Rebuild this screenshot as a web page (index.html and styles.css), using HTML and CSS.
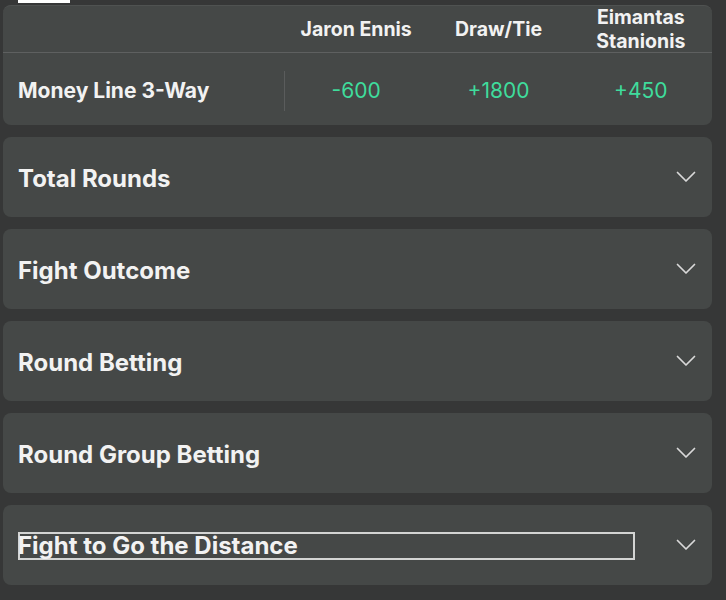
FILE: index.html
```html
<!DOCTYPE html>
<html>
<head>
<meta charset="utf-8">
<link rel="stylesheet" href="styles.css">
</head>
<body>
<div class="page">
  <div class="tabs"><div class="tab-indicator"></div></div>
  <div class="card moneyline">
    <div class="ml-head">
      <div class="ml-label-col"></div>
      <div class="ml-col">Jaron Ennis</div>
      <div class="ml-col">Draw/Tie</div>
      <div class="ml-col">Eimantas<br>Stanionis</div>
    </div>
    <div class="ml-body">
      <div class="ml-label-col"><span class="ml-title">Money Line 3-Way</span></div>
      <div class="ml-col odds">-600</div>
      <div class="ml-col odds">+1800</div>
      <div class="ml-col odds">+450</div>
    </div>
  </div>
  <div class="card market"><span class="market-title">Total Rounds</span><svg class="chev" width="20" height="12" viewBox="0 0 20 12"><path d="M1.5 1.5 L10 10 L18.5 1.5" fill="none" stroke="#d9d9d9" stroke-width="1.7" stroke-linecap="round" stroke-linejoin="round"/></svg></div>
  <div class="card market"><span class="market-title">Fight Outcome</span><svg class="chev" width="20" height="12" viewBox="0 0 20 12"><path d="M1.5 1.5 L10 10 L18.5 1.5" fill="none" stroke="#d9d9d9" stroke-width="1.7" stroke-linecap="round" stroke-linejoin="round"/></svg></div>
  <div class="card market"><span class="market-title">Round Betting</span><svg class="chev" width="20" height="12" viewBox="0 0 20 12"><path d="M1.5 1.5 L10 10 L18.5 1.5" fill="none" stroke="#d9d9d9" stroke-width="1.7" stroke-linecap="round" stroke-linejoin="round"/></svg></div>
  <div class="card market"><span class="market-title">Round Group Betting</span><svg class="chev" width="20" height="12" viewBox="0 0 20 12"><path d="M1.5 1.5 L10 10 L18.5 1.5" fill="none" stroke="#d9d9d9" stroke-width="1.7" stroke-linecap="round" stroke-linejoin="round"/></svg></div>
  <div class="card market"><span class="market-title focused">Fight to Go the Distance</span><svg class="chev" width="20" height="12" viewBox="0 0 20 12"><path d="M1.5 1.5 L10 10 L18.5 1.5" fill="none" stroke="#d9d9d9" stroke-width="1.7" stroke-linecap="round" stroke-linejoin="round"/></svg></div>
</div>
</body>
</html>
```
FILE: styles.css
```css
html, body {
  margin: 0;
  padding: 0;
  background: #363737;
}
body {
  font-family: Inter, "Liberation Sans", sans-serif;
  color: #f2f2f2;
  width: 726px;
  height: 600px;
  overflow: hidden;
}
.page {
  display: flex;
  flex-direction: column;
  gap: 12px;
  padding: 0 14px 0 3px;
}
.tabs {
  height: 3px;
  margin-bottom: -10px;
}
.tab-indicator {
  width: 52px;
  height: 3px;
  margin-left: 15px;
  background: #ffffff;
}
.card {
  background: #454847;
  border-radius: 8px;
}
.moneyline {
  display: flex;
  flex-direction: column;
  border-top: 1px solid #4f5251;
}
.ml-head, .ml-body {
  display: flex;
}
.ml-head {
  height: 46px;
  border-bottom: 1px solid #5e6060;
  align-items: center;
}
.ml-body {
  height: 72px;
  align-items: center;
  padding-top: 3px;
  box-sizing: border-box;
}
.ml-label-col {
  width: 282px;
  flex: none;
  display: flex;
  align-items: center;
  height: 40px;
  border-right: 1px solid #5a5c5c;
  box-sizing: border-box;
  padding-left: 15px;
}
.ml-head .ml-label-col {
  border-right: none;
}
.ml-col {
  flex: 1;
  text-align: center;
  font-weight: 700;
  font-size: 19.5px;
  line-height: 24px;
}
.ml-title {
  font-weight: 700;
  font-size: 21px;
}
.odds {
  font-weight: 400;
  font-size: 21px;
  color: #3fdc9c;
}
.market {
  height: 80px;
  display: flex;
  align-items: center;
  justify-content: space-between;
  padding: 0 16px 0 15px;
}
.market-title {
  font-weight: 700;
  font-size: 24px;
  margin-top: 2px;
}
.chev {
  flex: none;
}
.focused {
  font-size: 24px;
  width: 613px;
  height: 24px;
  line-height: 24px;
  border: 2px solid #d3d4d3;
  box-sizing: content-box;
  margin-top: 2px;
  text-indent: -2px;
  white-space: nowrap;
}
```
